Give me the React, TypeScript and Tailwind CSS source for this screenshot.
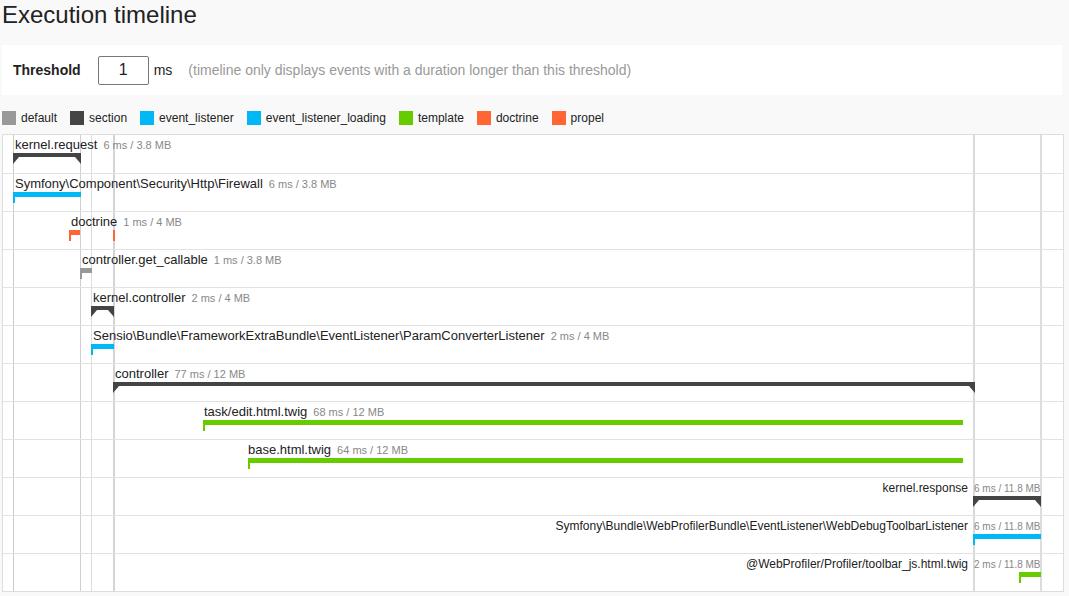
import React from 'react';

type Kind = 'section' | 'event';

interface TimelineEvent {
  label: string;
  meta: string;
  color: string;
  kind: Kind;
  labelX: number;
  alignRight?: boolean;
  periods: [number, number][];
}

const legend = [
  { name: 'default', color: 'bg-[#999999]' },
  { name: 'section', color: 'bg-[#444444]' },
  { name: 'event_listener', color: 'bg-[#00b8f5]' },
  { name: 'event_listener_loading', color: 'bg-[#00b8f5]' },
  { name: 'template', color: 'bg-[#66cc00]' },
  { name: 'doctrine', color: 'bg-[#ff6633]' },
  { name: 'propel', color: 'bg-[#ff6633]' },
];

const events: TimelineEvent[] = [
  { label: 'kernel.request', meta: '6 ms / 3.8 MB', color: '#444444', kind: 'section', labelX: 12, periods: [[10, 68]] },
  { label: 'Symfony\\Component\\Security\\Http\\Firewall', meta: '6 ms / 3.8 MB', color: '#00b8f5', kind: 'event', labelX: 12, periods: [[10, 68]] },
  { label: 'doctrine', meta: '1 ms / 4 MB', color: '#ff6633', kind: 'event', labelX: 68, periods: [[66, 11], [110, 2]] },
  { label: 'controller.get_callable', meta: '1 ms / 3.8 MB', color: '#999999', kind: 'event', labelX: 79, periods: [[77, 12]] },
  { label: 'kernel.controller', meta: '2 ms / 4 MB', color: '#444444', kind: 'section', labelX: 90, periods: [[88, 23]] },
  { label: 'Sensio\\Bundle\\FrameworkExtraBundle\\EventListener\\ParamConverterListener', meta: '2 ms / 4 MB', color: '#00b8f5', kind: 'event', labelX: 90, periods: [[88, 23]] },
  { label: 'controller', meta: '77 ms / 12 MB', color: '#444444', kind: 'section', labelX: 112, periods: [[110, 862]] },
  { label: 'task/edit.html.twig', meta: '68 ms / 12 MB', color: '#66cc00', kind: 'event', labelX: 201, periods: [[200, 760]] },
  { label: 'base.html.twig', meta: '64 ms / 12 MB', color: '#66cc00', kind: 'event', labelX: 245, periods: [[245, 715]] },
  { label: 'kernel.response', meta: '6 ms / 11.8 MB', color: '#444444', kind: 'section', labelX: 0, alignRight: true, periods: [[970, 68]] },
  { label: 'Symfony\\Bundle\\WebProfilerBundle\\EventListener\\WebDebugToolbarListener', meta: '6 ms / 11.8 MB', color: '#00b8f5', kind: 'event', labelX: 0, alignRight: true, periods: [[970, 68]] },
  { label: '@WebProfiler/Profiler/toolbar_js.html.twig', meta: '2 ms / 11.8 MB', color: '#66cc00', kind: 'event', labelX: 0, alignRight: true, periods: [[1016, 22]] },
];

// grid lines inside the timeline box (x offsets from the inner left edge)
const gridLines = [
  { x: 10, w: 1, c: 'bg-[#cccccc]' },
  { x: 77, w: 1, c: 'bg-[#d0d0d0]' },
  { x: 88, w: 1, c: 'bg-[#dddddd]' },
  { x: 110, w: 2, c: 'bg-[#d4d4d4]' },
  { x: 970, w: 2, c: 'bg-[#dadada]' },
  { x: 1037, w: 2, c: 'bg-[#dddddd]' },
];

function Period({ left, width, color, kind }: { left: number; width: number; color: string; kind: Kind }) {
  if (kind === 'section') {
    return (
      <>
        <div className="absolute top-[18px] h-[4px]" style={{ left, width, backgroundColor: color }} />
        <div
          className="absolute top-[22px] h-[7px] w-[6px] [clip-path:polygon(0_0,100%_0,0_100%)]"
          style={{ left, backgroundColor: color }}
        />
        <div
          className="absolute top-[22px] h-[7px] w-[6px] [clip-path:polygon(0_0,100%_0,100%_100%)]"
          style={{ left: left + width - 6, backgroundColor: color }}
        />
      </>
    );
  }
  return (
    <>
      <div className="absolute top-[18px] h-[5px]" style={{ left, width, backgroundColor: color }} />
      <div className="absolute top-[18px] h-[11px] w-[2px]" style={{ left, backgroundColor: color }} />
    </>
  );
}

function EventRow({ ev, first }: { ev: TimelineEvent; first: boolean }) {
  return (
    <div className={`relative h-[38px] ${first ? '' : 'border-t border-[#e2e2e2]'}`}>
      {ev.alignRight ? (
        <>
          <div className="absolute top-[3px] right-[95px] whitespace-nowrap text-[12px] leading-[15px] text-[#222]">
            {ev.label}
          </div>
          <div className="absolute top-[4px] left-[971px] whitespace-nowrap text-[10px] leading-[13px] text-[#888]">
            {ev.meta}
          </div>
        </>
      ) : (
        <div
          className="absolute top-[2px] flex items-baseline gap-[6px] whitespace-nowrap leading-[15px]"
          style={{ left: ev.labelX }}
        >
          <span className="text-[13px] text-[#222]">{ev.label}</span>
          <span className="text-[11px] text-[#888]">{ev.meta}</span>
        </div>
      )}
      {ev.periods.map(([l, w], i) => (
        <Period key={i} left={l} width={w} color={ev.color} kind={ev.kind} />
      ))}
    </div>
  );
}

export default function App() {
  return (
    <div className="min-h-screen bg-[#f9f9f9] font-['Liberation_Sans',Arial,sans-serif] text-[#222]">
      <h1 className="pl-[2px] text-[24px] leading-[30px] font-normal text-[#222]">Execution timeline</h1>

      <div className="mt-[15px] ml-[2px] flex h-[50px] w-[1060px] items-center bg-white pl-[11px]">
        <span className="text-[14px] font-bold text-[#222]">Threshold</span>
        <div className="ml-[17px] flex h-[29px] w-[51px] items-center justify-center rounded-[2px] border border-[#777] text-[16px] text-[#222]">
          1
        </div>
        <span className="ml-[5px] text-[14px] text-[#222]">ms</span>
        <span className="ml-[16px] text-[14px] text-[#999]">
          (timeline only displays events with a duration longer than this threshold)
        </span>
      </div>

      <div className="mt-[16px] ml-[2px] flex h-[14px] items-center gap-[13px]">
        {legend.map((item) => (
          <div key={item.name} className="flex items-center gap-[5px]">
            <span className={`h-[14px] w-[14px] ${item.color}`} />
            <span className="text-[12px] leading-[14px] text-[#222]">{item.name}</span>
          </div>
        ))}
      </div>

      <div className="relative mt-[9px] ml-[2px] w-[1062px] border border-[#dddddd] bg-white">
        {gridLines.map((g) => (
          <div
            key={g.x}
            className={`pointer-events-none absolute inset-y-0 ${g.c}`}
            style={{ left: g.x, width: g.w }}
          />
        ))}
        {events.map((ev, i) => (
          <EventRow key={i} ev={ev} first={i === 0} />
        ))}
      </div>
    </div>
  );
}
